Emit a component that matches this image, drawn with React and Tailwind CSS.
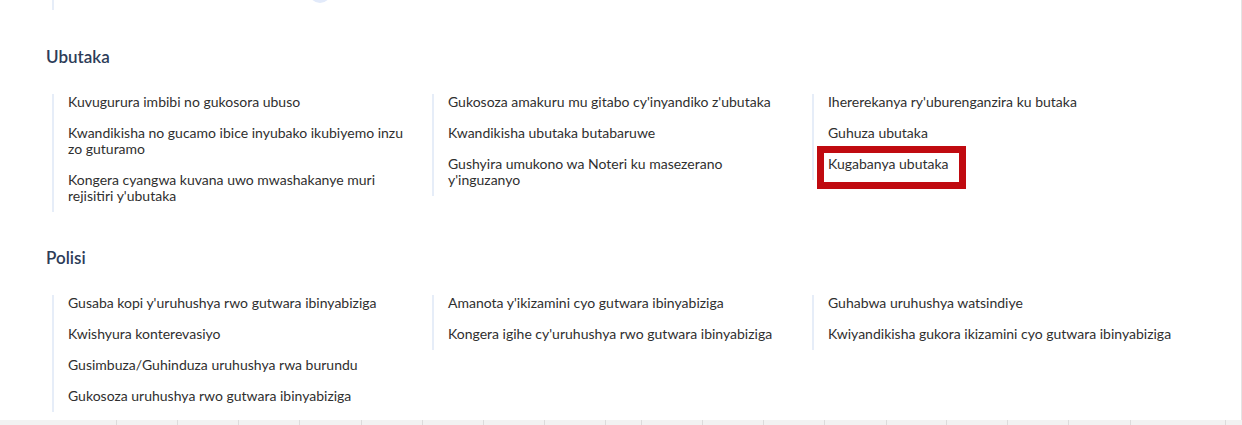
import React from 'react';

const sections = [
  {
    title: 'Ubutaka',
    columns: [
      [
        'Kuvugurura imbibi no gukosora ubuso',
        'Kwandikisha no gucamo ibice inyubako ikubiyemo inzu zo guturamo',
        "Kongera cyangwa kuvana uwo mwashakanye muri rejisitiri y'ubutaka",
      ],
      [
        "Gukosoza amakuru mu gitabo cy'inyandiko z'ubutaka",
        'Kwandikisha ubutaka butabaruwe',
        "Gushyira umukono wa Noteri ku masezerano y'inguzanyo",
      ],
      [
        "Ihererekanya ry'uburenganzira ku butaka",
        'Guhuza ubutaka',
        'Kugabanya ubutaka',
      ],
    ],
  },
  {
    title: 'Polisi',
    columns: [
      [
        "Gusaba kopi y'uruhushya rwo gutwara ibinyabiziga",
        'Kwishyura konterevasiyo',
        'Gusimbuza/Guhinduza uruhushya rwa burundu',
        'Gukosoza uruhushya rwo gutwara ibinyabiziga',
      ],
      [
        "Amanota y'ikizamini cyo gutwara ibinyabiziga",
        "Kongera igihe cy'uruhushya rwo gutwara ibinyabiziga",
      ],
      [
        'Guhabwa uruhushya watsindiye',
        'Kwiyandikisha gukora ikizamini cyo gutwara ibinyabiziga',
      ],
    ],
  },
];

// divider positions of the table header peeking in at the bottom
const dividers = [55, 116, 177, 238, 299, 361, 422, 483, 544, 605, 641, 702, 763, 824, 886, 946, 1007, 1068, 1130, 1225];

function ServiceItem({ label, highlighted, wide }) {
  return (
    <li className={`relative text-[14px] leading-4 text-[#2f2f2f] ${wide ? 'max-w-[364px]' : 'max-w-[340px]'}`}>
      {highlighted && (
        <span className="absolute -left-[11px] -top-[10px] w-[149px] h-[43px] border-[7px] border-[#c00a10] pointer-events-none" />
      )}
      <a href="#" className="hover:underline">
        {label}
      </a>
    </li>
  );
}

function Section({ title, columns, first }) {
  return (
    <section className={first ? 'mt-[37px]' : 'mt-[36px]'}>
      <h2 className="text-[17px] leading-5 font-semibold text-[#2d3c58]">{title}</h2>
      <div className="mt-[27px] ml-[6px] grid grid-cols-[380px_380px_380px] items-start">
        {columns.map((items, ci) => (
          <ul key={ci} className="flex flex-col gap-[15px] border-l-2 border-[#e6edf8] pl-[14px] pb-[8px]">
            {items.map((label) => (
              <ServiceItem
                key={label}
                label={label}
                wide={ci === 2}
                highlighted={label === 'Kugabanya ubutaka'}
              />
            ))}
          </ul>
        ))}
      </div>
    </section>
  );
}

export default function App() {
  return (
    <div className="w-[1242px] h-[425px] bg-white overflow-hidden flex flex-col font-['Lato',sans-serif]">
      <div className="flex-1 border-r border-[#e4e4e4] pl-[46px]">
        {/* tail of the previous section */}
        <div className="relative h-[10px] ml-[6px] border-l-2 border-[#e6edf8]">
          <div className="absolute left-[255px] -top-[19px] w-[22px] h-[22px] rounded-full bg-[#e2eafa]" />
        </div>
        {sections.map((s, i) => (
          <Section key={s.title} title={s.title} columns={s.columns} first={i === 0} />
        ))}
      </div>
      <div className="h-[5px] bg-[#f2f2f2] flex">
        {dividers.map((x, i) => (
          <div
            key={x}
            className={i === 0 ? 'h-full' : 'h-full border-l border-[#dcdcdc]'}
            style={{ width: (dividers[i + 1] ?? 1242) - x, marginLeft: i === 0 ? x : 0 }}
          />
        ))}
      </div>
    </div>
  );
}
